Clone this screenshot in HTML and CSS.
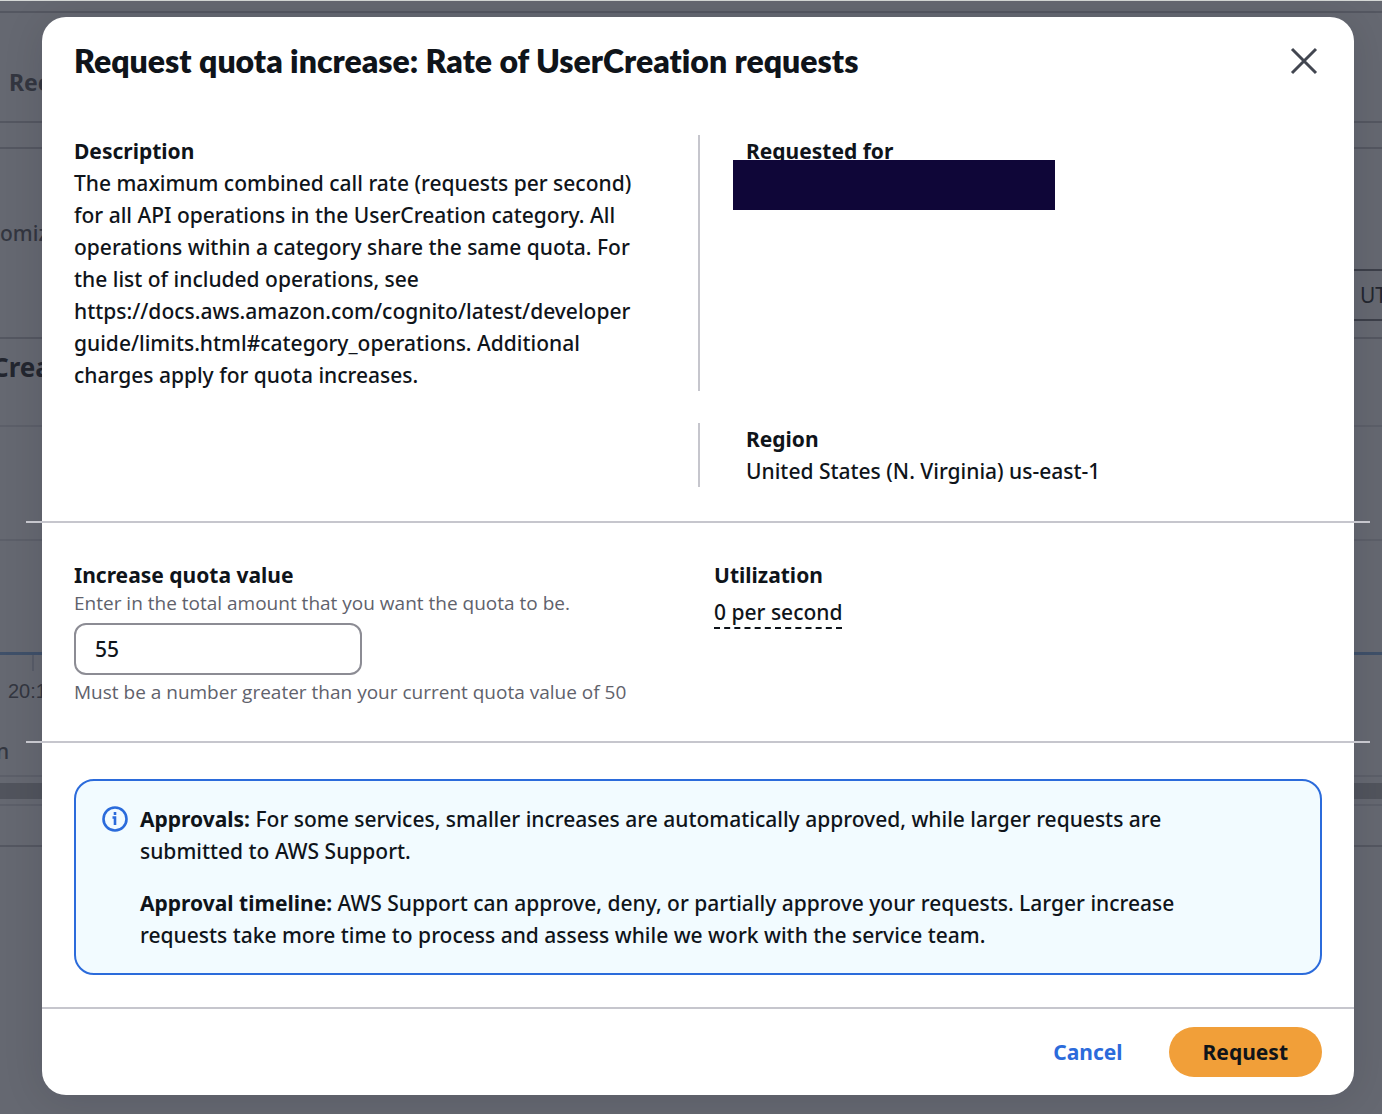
FILE: index.html
```
<!DOCTYPE html>
<html lang="en">
<head>
  <meta charset="UTF-8">
  <meta name="viewport" content="width=device-width, initial-scale=1.0">
  <title>Request quota increase</title>
  <link rel="stylesheet" href="styles.css">
</head>
<body>
  <!-- Dimmed page under the dialog -->
  <div class="page-behind" aria-hidden="true">
    <div class="top-strip"></div>
    <div class="page-heading">Rec</div>
    <div class="page-gap"></div>
    <div class="filter-row">
      <span>omiz</span>
      <span class="timezone">UT</span>
    </div>
    <div class="chart-heading">Crea</div>
    <div class="chart-row"></div>
    <div class="chart-row chart-axis"></div>
    <div class="chart-labels">20:1</div>
    <div class="chart-legend">n</div>
    <div class="scroll-track"></div>
    <div class="page-end"></div>
  </div>

  <div class="overlay">
    <div class="modal" role="dialog" aria-modal="true" aria-labelledby="modal-title">
      <div class="modal-header">
        <h1 id="modal-title">Request quota increase: Rate of UserCreation requests</h1>
        <button type="button" class="close-button" aria-label="Close">
          <svg width="28" height="28" viewBox="0 0 28 28" fill="none" stroke="#424650" stroke-width="3">
            <path d="M2 2L26 26M26 2L2 26"/>
          </svg>
        </button>
      </div>

      <div class="modal-body">
        <div class="details">
          <div class="detail description">
            <h2>Description</h2>
            <p>The maximum combined call rate (requests per second) for all API operations in the UserCreation category. All operations within a category share the same quota. For the list of included operations, see https://docs.aws.amazon.com/cognito/latest/developer<wbr>guide/limits.html#category_operations. Additional charges apply for quota increases.</p>
          </div>
          <div class="detail bordered">
            <h2>Requested for</h2>
            <div class="redacted"></div>
          </div>
          <div class="detail bordered region">
            <h2>Region</h2>
            <p>United States (N. Virginia) us-east-1</p>
          </div>
        </div>

        <hr>

        <div class="form-columns">
          <div class="form-field">
            <label for="quota">Increase quota value</label>
            <div class="hint">Enter in the total amount that you want the quota to be.</div>
            <input type="text" inputmode="numeric" id="quota" value="55">
            <div class="hint">Must be a number greater than your current quota value of 50</div>
          </div>
          <div class="utilization">
            <h2>Utilization</h2>
            <span class="usage">0 per second</span>
          </div>
        </div>

        <hr>

        <div class="alert">
          <svg class="info-icon" width="26" height="26" viewBox="0 0 26 26" fill="none" stroke="#2b6bdb">
            <circle cx="13" cy="13" r="11.5" stroke-width="2.6"/>
            <path d="M13 6V9M10.5 11.5H13V19" stroke-width="2.6"/>
          </svg>
          <div class="alert-text">
            <p><strong>Approvals:</strong> For some services, smaller increases are automatically approved, while larger requests are submitted to AWS Support.</p>
            <p><strong>Approval timeline:</strong> AWS Support can approve, deny, or partially approve your requests. Larger increase requests take more time to process and assess while we work with the service team.</p>
          </div>
        </div>
      </div>

      <div class="modal-footer">
        <button type="button" class="cancel-button">Cancel</button>
        <button type="button" class="request-button">Request</button>
      </div>
    </div>
  </div>
</body>
</html>
```

FILE: styles.css
```
* {
  box-sizing: border-box;
}

body {
  position: relative;
  margin: 0;
  min-height: 100vh;
  background-color: #656871;
  color: #0f141a;
  font-family: "Noto Sans", "Open Sans", sans-serif;
  font-size: 21px;
  font-weight: 500;
  line-height: 32px;
}

h1, h2, p {
  margin: 0;
}

h2, label {
  display: block;
  font-size: 21px;
  font-weight: 700;
}

/* Page behind the dialog */
.page-behind {
  position: absolute;
  inset: 0;
  overflow: hidden;
  border-top: 1px solid #d5d8d6;
  color: #333640;
}

.top-strip {
  height: 12px;
  border-bottom: 2px solid #545761;
}

.page-heading {
  padding: 53px 9px 23px;
  border-bottom: 2px solid #545761;
  font-size: 23px;
  font-weight: 700;
}

.page-gap {
  height: 26px;
  border-bottom: 2px solid #545761;
}

.filter-row {
  display: flex;
  justify-content: space-between;
  padding-top: 68px;
  height: 190px;
  border-bottom: 2px solid #545761;
}

.timezone {
  width: 40px;
  height: 52px;
  margin-top: 52px;
  padding: 8px 0 8px 16px;
  border: 2px solid #3c3f49;
  border-right: none;
  color: #23262f;
  font-weight: 400;
}

.chart-heading {
  height: 88px;
  padding-top: 12px;
  text-indent: -8px;
  border-bottom: 2px solid #5c5f69;
  color: #23262f;
  font-size: 26px;
  font-weight: 700;
}

.chart-row {
  height: 114px;
  border-bottom: 2px solid #5c5f69;
}

.chart-axis {
  border-bottom: 3px solid #3f5069;
}

.chart-labels {
  padding: 20px 8px;
  background: linear-gradient(#585c68, #585c68) 32px 0 / 2px 16px no-repeat;
  font-family: "Liberation Sans", sans-serif;
  font-size: 20px;
  font-weight: 400;
}

.chart-legend {
  height: 50px;
  padding-top: 8px;
  text-indent: -4px;
  border-bottom: 2px solid #5c5f69;
}

.scroll-track {
  height: 29px;
  border-top: 6px solid #656871;
  border-bottom: 2px solid #5c5f69;
  background: linear-gradient(#51545d 16px, #656871 16px);
}

.page-end {
  height: 41px;
  border-bottom: 2px solid #545761;
}

/* Dialog */
.overlay {
  position: relative;
  padding: 17px 28px 19px 42px;
}

.modal {
  background-color: #fff;
  border-radius: 24px;
  box-shadow: 0 4px 40px rgba(0, 7, 22, 0.12);
}

.modal-header {
  display: flex;
  align-items: center;
  justify-content: space-between;
  padding: 24px 36px 54px 32px;
}

.modal-header h1 {
  font-family: Lato, "Noto Sans", sans-serif;
  font-size: 32px;
  font-weight: 800;
  font-variant-ligatures: none;
  line-height: 40px;
}

.close-button {
  display: flex;
  padding: 0;
  border: none;
  background: none;
  cursor: pointer;
}

.modal-body {
  padding: 0 32px 32px;
}

.details {
  display: grid;
  grid-template-columns: 1fr 1fr;
  row-gap: 32px;
}

.description {
  padding-right: 48px;
}

.bordered {
  padding-left: 46px;
  border-left: 2px solid #c6c6cd;
}

.region {
  grid-column: 2;
}

.redacted {
  position: relative;
  width: 322px;
  height: 50px;
  margin: -7px 0 0 -13px;
  background-color: #0f0638;
}

hr {
  height: 2px;
  margin: 34px -48px 36px;
  border: none;
  background-color: #c6c6cd;
}

.form-columns {
  display: grid;
  grid-template-columns: 1fr 1fr;
  column-gap: 32px;
  padding-bottom: 3px;
}

.hint {
  color: #5f626c;
  font-family: "Open Sans", "Noto Sans", sans-serif;
  font-size: 19px;
  font-weight: 400;
  line-height: 24px;
}

#quota {
  display: block;
  width: 288px;
  height: 52px;
  margin: 8px 0 5px;
  padding: 0 19px;
  border: 2px solid #8c8c94;
  border-radius: 12px;
  color: #0f141a;
  font: inherit;
}

.usage {
  display: inline-block;
  margin-top: 6px;
  border-bottom: 2px dashed #0f141a;
  line-height: 30px;
}

.alert {
  display: flex;
  gap: 12px;
  padding: 22px 120px 22px 26px;
  border: 2px solid #2b6bdb;
  border-radius: 20px;
  background-color: #f2fbff;
}

.info-icon {
  flex: none;
  margin-top: 3px;
}

.alert-text p + p {
  margin-top: 20px;
}

.modal-footer {
  display: flex;
  justify-content: flex-end;
  gap: 14px;
  padding: 18px 32px;
  border-top: 2px solid #c6c6cd;
}

.modal-footer button {
  height: 50px;
  border: none;
  border-radius: 25px;
  font: inherit;
  font-weight: 700;
  cursor: pointer;
}

.cancel-button {
  padding: 0 32px;
  background: none;
  color: #2b6bdb;
}

.request-button {
  padding: 0 34px;
  background-color: #f19f39;
  color: #0f141a;
}
```
